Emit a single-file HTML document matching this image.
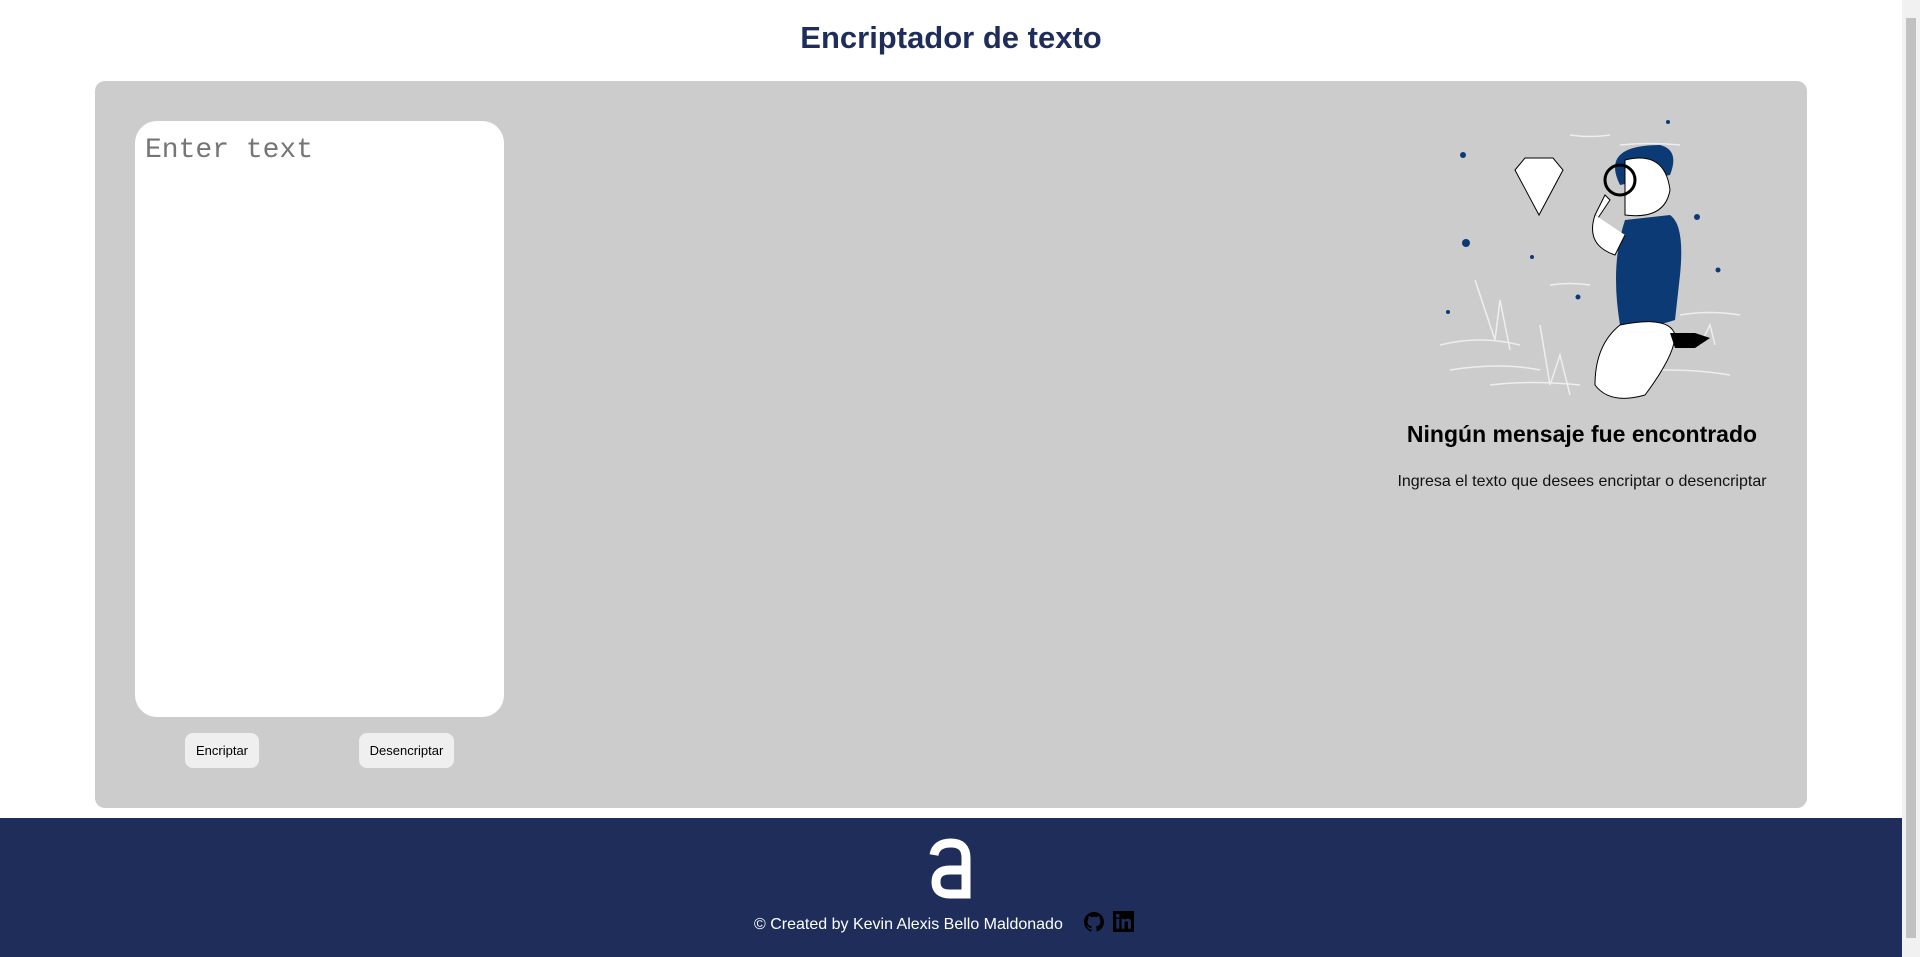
<!DOCTYPE html>
<html><head><meta charset="utf-8"><style>
*{box-sizing:border-box;margin:0;padding:0}
html,body{width:1920px;height:957px;overflow:hidden;background:#fff;font-family:"Liberation Sans",sans-serif}
.sb{position:absolute;right:0;top:0;width:18px;height:957px;background:#f1f1f1}
.sb div{position:absolute;left:4px;top:18px;width:10px;height:920px;background:#c1c1c1}
h1{position:absolute;left:0;width:1902px;top:20px;text-align:center;font-size:31px;color:#1f2d5a;font-weight:bold}
.panel{position:absolute;left:95px;top:81px;width:1712px;height:727px;background:#cccccc;border-radius:10px}
.ta{position:absolute;left:135px;top:121px;width:369px;height:596px;background:#fff;border-radius:22px;font-family:"Liberation Mono",monospace;font-size:28px;color:#757575;padding:14px 10px}
.btn{position:absolute;top:733px;height:35px;background:#efefef;border-radius:8px;font-size:13px;color:#000;display:flex;align-items:center;justify-content:center}
h2{position:absolute;left:1352px;width:460px;top:421px;text-align:center;font-size:23px;color:#000}
.sub{position:absolute;left:1352px;width:460px;top:473px;text-align:center;font-size:16px;color:#111}
footer{position:absolute;left:0;top:818px;width:1902px;height:139px;background:#1f2d5a}
.ft{position:absolute;left:754px;top:98px;font-size:16px;color:#fff}
</style></head><body>
<h1>Encriptador de texto</h1>
<div class="panel"></div>
<div class="ta">Enter text</div>
<div class="btn" style="left:185px;width:74px">Encriptar</div>
<div class="btn" style="left:359px;width:95px">Desencriptar</div>
<svg style="position:absolute;left:1430px;top:115px" width="320" height="300" viewBox="0 0 320 300">
<g fill="none" stroke="#eee" stroke-width="1.5">
<path d="M10 230 q40-10 80 0 M20 255 q50-8 90 0 M60 270 q40-5 90 0 M180 260 q60-10 120 0 M250 200 q30-5 60 0 M120 170 q20-3 40 0 M140 20 q20 3 40 0 M190 30 q30-3 60 0 M200 50 q20-3 40 0"/>
<path d="M45 165 l20 60 l5-40 l10 50 M110 210 l10 60 l10-30 l10 40 M270 230 l10-20 l5 20"/>
</g>
<g fill="#0c3a74"><circle cx="33" cy="40" r="3"/><circle cx="36" cy="128" r="4"/><circle cx="18" cy="197" r="2"/><circle cx="102" cy="142" r="2"/><circle cx="148" cy="182" r="2.5"/><circle cx="267" cy="102" r="3"/><circle cx="288" cy="155" r="2.5"/><circle cx="238" cy="7" r="2"/></g>
<path d="M85 55 l10 -12 h28 l10 12 l-24 45z" fill="#fff" stroke="#000"/>
<path d="M190 70 q-20-40 40-40 q20 5 10 30z" fill="#0c3a74"/>
<path d="M195 45 q40-10 45 30 q-5 30 -45 25z" fill="#fff" stroke="#000"/>
<circle cx="190" cy="65" r="15" fill="none" stroke="#000" stroke-width="3"/>
<path d="M165 100 l10-20 l5 5 l-12 18z" fill="#fff" stroke="#000"/>
<path d="M195 105 l45-5 q15 10 10 60 l-5 45 q-30 10-55 5 q-10-60 5-105z" fill="#0c3a74"/>
<path d="M165 100 q-10 30 20 40 l10-20" fill="#fff" stroke="#000"/>
<path d="M190 210 q50-10 55 10 q0 20-30 60 q-35 10-50-10 q0-40 25-60z" fill="#fff" stroke="#000"/>
<path d="M240 218 h25 l15 5 l-15 10 h-20z" fill="#000"/>
</svg>
<h2>Ningún mensaje fue encontrado</h2>
<div class="sub">Ingresa el texto que desees encriptar o desencriptar</div>
<footer>
<svg style="position:absolute;left:928px;top:20px" width="46" height="62" viewBox="0 0 46 62"><path d="M6 17 Q8 5 23 5 Q38 5 38 20 V56 H22 Q8 56 8 44 Q8 32 22 32 H38" fill="none" stroke="#fff" stroke-width="9"/></svg>
<div class="ft">© Created by Kevin Alexis Bello Maldonado</div>
<svg style="position:absolute;left:1084px;top:94px" width="20" height="20" viewBox="0 0 16 16"><path fill="#000" d="M8 0C3.6 0 0 3.6 0 8c0 3.5 2.3 6.5 5.5 7.6.4.1.5-.2.5-.4v-1.4c-2.2.5-2.7-1-2.7-1-.4-.9-.9-1.2-.9-1.2-.7-.5.1-.5.1-.5.8.1 1.200.8 1.2.8.7 1.2 1.9.9 2.3.7.1-.5.3-.9.5-1.100-1.8-.2-3.6-.9-3.600-4 0-.9.3-1.6.8-2.100-.1-.2-.4-1 .1-2.100 0 0 .7-.2 2.2.8.6-.2 1.3-.3 2-.3s1.4.1 2 .3c1.5-1 2.2-.8 2.2-.8.4 1.1.2 1.9.1 2.1.5.6.8 1.3.8 2.1 0 3.1-1.9 3.7-3.6 3.9.3.3.5.8.5 1.5v2.2c0 .2.1.5.6.4C13.7 14.5 16 11.5 16 8c0-4.4-3.6-8-8-8z"/></svg>
<svg style="position:absolute;left:1113px;top:93px" width="21" height="21" viewBox="0 0 16 16"><rect width="16" height="16" fill="#000"/><rect x="2.5" y="6" width="2.3" height="7.5" fill="#1f2d5a"/><circle cx="3.6" cy="3.6" r="1.4" fill="#1f2d5a"/><path d="M6.5 6h2.2v1.1c.4-.7 1.2-1.3 2.4-1.3 2 0 2.6 1.2 2.6 3.1v4.6h-2.3V9.4c0-1-.2-1.7-1.2-1.7s-1.4.7-1.4 1.7v4.1H6.5z" fill="#1f2d5a"/></svg>
</footer>
<div class="sb"><div></div></div>
</body></html>
